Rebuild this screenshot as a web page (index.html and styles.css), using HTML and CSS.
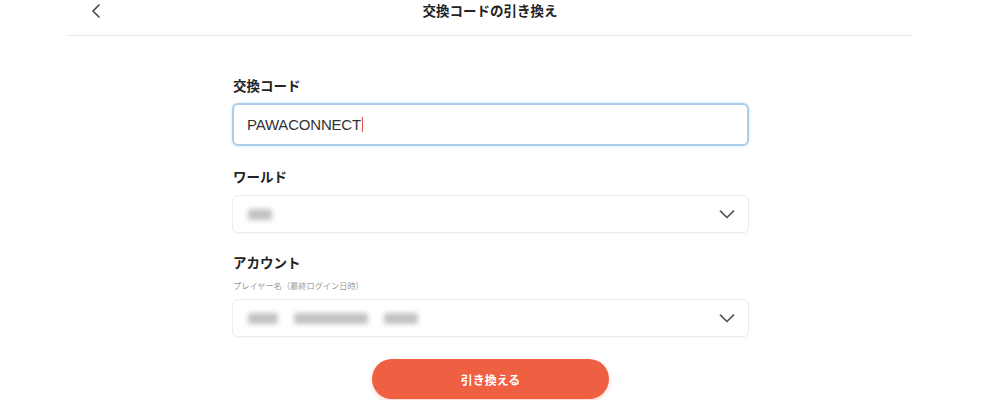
FILE: index.html
```html
<!DOCTYPE html>
<html lang="ja">
<head>
<meta charset="utf-8">
<title>交換コードの引き換え</title>
<link rel="stylesheet" href="styles.css">
</head>
<body>
<header class="topbar">
  <button class="back" aria-label="戻る">
    <svg width="10" height="14" viewBox="0 0 10 14"><path d="M8 1 L2 7 L8 13" fill="none" stroke="#444" stroke-width="1.6" stroke-linecap="round" stroke-linejoin="round"/></svg>
  </button>
  <h1 class="title">交換コードの引き換え</h1>
</header>
<main class="form">
  <label class="label first">交換コード</label>
  <div class="input focused"><span class="value">PAWACONNECT</span><span class="caret"></span></div>

  <label class="label">ワールド</label>
  <div class="select">
    <div class="blurs"><span class="blur" style="width:24px"></span></div>
    <svg class="chev" width="16" height="9" viewBox="0 0 16 9"><path d="M1.5 1.2 L8 7.5 L14.5 1.2" fill="none" stroke="#555" stroke-width="1.7" stroke-linecap="round" stroke-linejoin="round"/></svg>
  </div>

  <label class="label third">アカウント</label>
  <div class="sublabel">プレイヤー名（最終ログイン日時）</div>
  <div class="select">
    <div class="blurs"><span class="blur" style="width:30px"></span><span class="blur" style="width:74px"></span><span class="blur" style="width:34px"></span></div>
    <svg class="chev" width="16" height="9" viewBox="0 0 16 9"><path d="M1.5 1.2 L8 7.5 L14.5 1.2" fill="none" stroke="#555" stroke-width="1.7" stroke-linecap="round" stroke-linejoin="round"/></svg>
  </div>

  <div class="actions"><button class="submit">引き換える</button></div>
</main>
</body>
</html>
```
FILE: styles.css
```css
* { box-sizing: border-box; }
html, body { margin: 0; padding: 0; background: #fff; }
body {
  font-family: "Liberation Sans", "Noto Sans CJK JP", sans-serif;
  color: #222;
  width: 1000px;
  height: 400px;
  overflow: hidden;
}
.topbar {
  position: relative;
  margin: 0 88px 0 68px;
  height: 36px;
  border-bottom: 1px solid #e9e9e9;
  display: flex;
  align-items: center;
  justify-content: center;
}
.back {
  position: absolute;
  left: 23px;
  top: 4px;
  border: 0;
  background: none;
  padding: 0;
  width: 10px;
  height: 14px;
  display: flex;
}
.title {
  margin: 0;
  font-size: 13.5px;
  font-weight: 700;
  line-height: 20px;
  margin-top: -11px;
  color: #222;
}
.form {
  width: 517px;
  margin-left: 232px;
  display: flex;
  flex-direction: column;
}
.label {
  font-size: 13.5px;
  font-weight: 700;
  line-height: 20px;
  margin: 22px 0 7px 1px;
  color: #222;
}
.label.first { margin-top: 41px; margin-bottom: 6px; }
.label.third { margin-top: 21px; margin-bottom: 7px; }
.sublabel {
  font-size: 8.2px;
  line-height: 12px;
  color: #9a9a9a;
  margin: 0 0 6px 1px;
}
.input {
  height: 43px;
  border: 2px solid #a9cdea;
  border-radius: 6px;
  box-shadow: 0 0 3px rgba(120, 170, 220, 0.35);
  display: flex;
  align-items: center;
  padding-left: 13px;
}
.value {
  font-size: 15px;
  color: #333;
  letter-spacing: -0.2px;
}
.caret {
  width: 1px;
  height: 15px;
  background: #d9534f;
  margin-left: 1px;
}
.select {
  height: 38px;
  border: 1px solid #ececec;
  border-radius: 6px;
  box-shadow: 0 1px 2px rgba(0, 0, 0, 0.04);
  display: flex;
  align-items: center;
  justify-content: space-between;
  padding: 0 13px 0 15px;
}
.blurs { display: flex; gap: 16px; align-items: center; }
.blur {
  height: 11px;
  background: #c2c2c2;
  filter: blur(2.5px);
  border-radius: 2px;
}
.chev { display: block; }
.actions {
  display: flex;
  justify-content: center;
  margin-top: 22px;
}
.submit {
  width: 237px;
  height: 40px;
  border: 0;
  border-radius: 20px;
  background: #ef5f41;
  color: #fff;
  font-family: "Liberation Sans", "Noto Sans CJK JP", sans-serif;
  font-size: 12px;
  font-weight: 700;
  box-shadow: 0 2px 4px rgba(239, 95, 65, 0.25);
}
```
